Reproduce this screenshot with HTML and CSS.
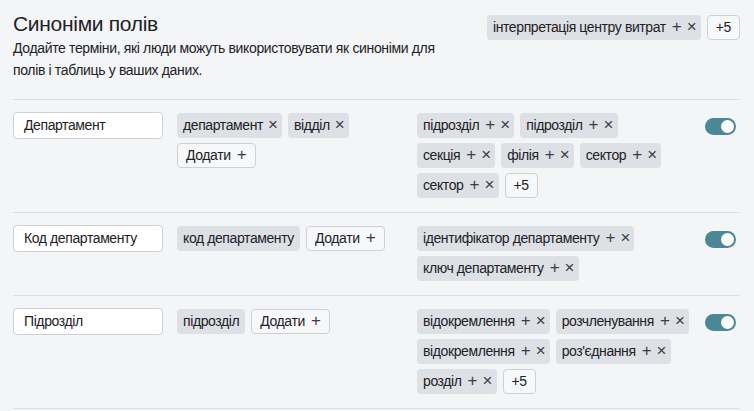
FILE: index.html
```html
<!DOCTYPE html>
<html lang="uk">
<head>
<meta charset="utf-8">
<link rel="stylesheet" href="styles.css">
</head>
<body>
<div class="page">
  <header class="head">
    <div class="intro">
      <h1 class="title">Синоніми полів</h1>
      <p class="desc">Додайте терміни, які люди можуть використовувати як синоніми для полів і таблиць у ваших даних.</p>
    </div>
    <div class="tags top-tags">
      <span class="chip">інтерпретація центру витрат<span class="ic plus">+</span><span class="ic x">×</span></span>
      <span class="more">+5</span>
    </div>
  </header>

  <div class="row">
    <div class="field">Департамент</div>
    <div class="tags">
      <span class="chip">департамент<span class="ic x">×</span></span>
      <span class="chip">відділ<span class="ic x">×</span></span>
      <span class="add">Додати<span class="ic plus">+</span></span>
    </div>
    <div class="tags">
      <span class="chip">підрозділ<span class="ic plus">+</span><span class="ic x">×</span></span>
      <span class="chip">підрозділ<span class="ic plus">+</span><span class="ic x">×</span></span>
      <span class="chip">секція<span class="ic plus">+</span><span class="ic x">×</span></span>
      <span class="chip">філія<span class="ic plus">+</span><span class="ic x">×</span></span>
      <span class="chip">сектор<span class="ic plus">+</span><span class="ic x">×</span></span>
      <span class="chip">сектор<span class="ic plus">+</span><span class="ic x">×</span></span>
      <span class="more">+5</span>
    </div>
    <div class="toggle"><span class="knob"></span></div>
  </div>

  <div class="row">
    <div class="field">Код департаменту</div>
    <div class="tags">
      <span class="chip">код департаменту</span>
      <span class="add">Додати<span class="ic plus">+</span></span>
    </div>
    <div class="tags">
      <span class="chip">ідентифікатор департаменту<span class="ic plus">+</span><span class="ic x">×</span></span>
      <span class="chip">ключ департаменту<span class="ic plus">+</span><span class="ic x">×</span></span>
    </div>
    <div class="toggle"><span class="knob"></span></div>
  </div>

  <div class="row">
    <div class="field">Підрозділ</div>
    <div class="tags">
      <span class="chip">підрозділ</span>
      <span class="add">Додати<span class="ic plus">+</span></span>
    </div>
    <div class="tags">
      <span class="chip">відокремлення<span class="ic plus">+</span><span class="ic x">×</span></span>
      <span class="chip">розчленування<span class="ic plus">+</span><span class="ic x">×</span></span>
      <span class="chip">відокремлення<span class="ic plus">+</span><span class="ic x">×</span></span>
      <span class="chip">роз'єднання<span class="ic plus">+</span><span class="ic x">×</span></span>
      <span class="chip">розділ<span class="ic plus">+</span><span class="ic x">×</span></span>
      <span class="more">+5</span>
    </div>
    <div class="toggle"><span class="knob"></span></div>
  </div>
</div>
</body>
</html>
```

FILE: styles.css
```css
html, body {
  margin: 0;
  padding: 0;
  background: #f3f5f7;
}
body {
  font-family: "Liberation Sans", Arial, sans-serif;
  color: #1e2125;
  letter-spacing: -0.4px;
}
.page {
  width: 727px;
  margin-left: 13px;
}
.head {
  display: flex;
  justify-content: space-between;
  align-items: flex-start;
  padding-top: 11px;
  padding-bottom: 18px;
  border-bottom: 1px solid #dcdfe3;
}
.intro {
  width: 450px;
}
.title {
  margin: 0;
  font-size: 21px;
  font-weight: 400;
  line-height: 25px;
  letter-spacing: -0.3px;
}
.desc {
  margin: 1px 0 0;
  font-size: 14px;
  line-height: 22px;
  letter-spacing: -0.35px;
}
.top-tags {
  margin-top: 4px;
  justify-content: flex-end;
}
.row {
  display: grid;
  grid-template-columns: 150px 226px 1fr 31px;
  column-gap: 14px;
  padding: 13px 4px 14px 0;
  border-bottom: 1px solid #dcdfe3;
  align-items: start;
}
.field {
  height: 25px;
  margin-top: -1px;
  border: 1px solid #cdd1d6;
  border-radius: 4px;
  background: #fff;
  font-size: 14px;
  line-height: 25px;
  padding-left: 10px;
}
.tags {
  display: flex;
  flex-wrap: wrap;
  gap: 5px 6px;
  align-content: flex-start;
}
.chip, .add, .more {
  display: inline-block;
  height: 25px;
  line-height: 25px;
  padding: 0 6px;
  border-radius: 4px;
  font-size: 14px;
  white-space: nowrap;
  box-sizing: border-box;
}
.chip {
  background: #dde0e4;
}
.add, .more {
  background: #f7f8f9;
  border: 1px solid #cdd1d6;
  line-height: 23px;
}
.add {
  padding: 0 8px;
}
.more {
  padding: 0 8px;
}
.ic {
  display: inline-block;
  text-align: center;
  color: #3a3e44;
  letter-spacing: 0;
  line-height: 1;
}
.plus {
  width: 10px;
  margin-left: 6px;
  font-size: 17px;
}
.x {
  width: 8px;
  margin-left: 5px;
  font-size: 17px;
}
.toggle {
  margin-top: 5px;
  width: 31px;
  height: 17px;
  border-radius: 9px;
  background: #4a8797;
  position: relative;
}
.knob {
  position: absolute;
  right: 2px;
  top: 2px;
  width: 13px;
  height: 13px;
  border-radius: 50%;
  background: #fff;
}
```
